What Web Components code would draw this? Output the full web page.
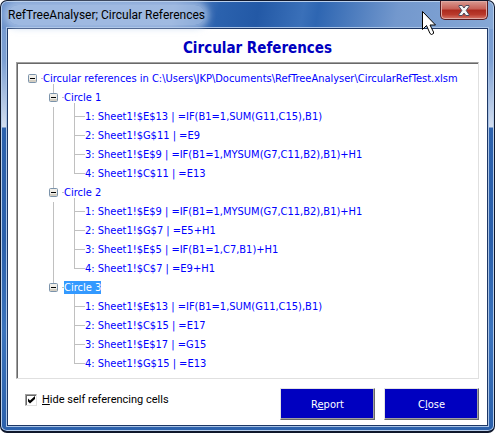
<!DOCTYPE html>
<html lang="en">
<head>
<meta charset="utf-8">
<title>RefTreeAnalyser; Circular References</title>
<style>
    body {
        margin: 0;
        font: 11px/19px "DejaVu Sans Condensed", "Noto Sans", sans-serif;
        color: #000;
        background: #fff;
    }
</style>
</head>
<body>
<aero-window>
    <span slot="title">RefTreeAnalyser; Circular References</span>
    <h1 slot="heading">Circular References</h1>
    <tree-view>
        <tree-node branch>
            <span slot="label">Circular references in C:\Users\JKP\Documents\RefTreeAnalyser\CircularRefTest.xlsm</span>
            <tree-node branch>
                <span slot="label">Circle 1</span>
                <tree-node><span slot="label">1: Sheet1!$E$13 | =IF(B1=1,SUM(G11,C15),B1)</span></tree-node>
                <tree-node><span slot="label">2: Sheet1!$G$11 | =E9</span></tree-node>
                <tree-node><span slot="label">3: Sheet1!$E$9 | =IF(B1=1,MYSUM(G7,C11,B2),B1)+H1</span></tree-node>
                <tree-node><span slot="label">4: Sheet1!$C$11 | =E13</span></tree-node>
            </tree-node>
            <tree-node branch>
                <span slot="label">Circle 2</span>
                <tree-node><span slot="label">1: Sheet1!$E$9 | =IF(B1=1,MYSUM(G7,C11,B2),B1)+H1</span></tree-node>
                <tree-node><span slot="label">2: Sheet1!$G$7 | =E5+H1</span></tree-node>
                <tree-node><span slot="label">3: Sheet1!$E$5 | =IF(B1=1,C7,B1)+H1</span></tree-node>
                <tree-node><span slot="label">4: Sheet1!$C$7 | =E9+H1</span></tree-node>
            </tree-node>
            <tree-node branch selected>
                <span slot="label">Circle 3</span>
                <tree-node><span slot="label">1: Sheet1!$E$13 | =IF(B1=1,SUM(G11,C15),B1)</span></tree-node>
                <tree-node><span slot="label">2: Sheet1!$C$15 | =E17</span></tree-node>
                <tree-node><span slot="label">3: Sheet1!$E$17 | =G15</span></tree-node>
                <tree-node><span slot="label">4: Sheet1!$G$15 | =E13</span></tree-node>
            </tree-node>
        </tree-node>
    </tree-view>
    <check-option slot="footer"><u>H</u>ide self referencing cells</check-option>
    <push-button slot="footer">R<u>e</u>port</push-button>
    <push-button slot="footer">C<u>l</u>ose</push-button>
</aero-window>

<script>
/**
 * Glass framed dialog window with a title bar, heading, body and footer.
 */
class AeroWindow extends HTMLElement {
    constructor() {
        super();
        this.attachShadow({ mode: 'open' });
    }

    connectedCallback() {
        this.shadowRoot.innerHTML = `
            <style>
                :host {
                    display: flex;
                    flex-direction: column;
                    box-sizing: border-box;
                    min-height: 100vh;
                    padding: 0 6px 5px;
                    border: 1px solid #10182c;
                    border-bottom-width: 2px;
                    border-radius: 7px;
                    box-shadow: inset 0 0 0 1px #b9cfec;
                    background:
                        linear-gradient(100deg, #6d93cc 0, #7396cd 35%, #2b62ae 44%, #2359a6 52%, #3a70b9 61%, #2e66b2 64%, #7398cd 80%, #86a8d6 100%) top / 100% 28px no-repeat,
                        linear-gradient(#7398cf 0, #7da0d3 60px, #d3deef 126px, #2d62ad 127px, #2b60ab 240px, #3c74bd 330px, #2b60ab 100%);
                }
                header {
                    position: relative;
                    display: flex;
                    align-items: flex-start;
                    justify-content: space-between;
                    height: 27px;
                }
                .title {
                    margin: 4px 0 0 1px;
                    font: 12px/20px Roboto, "Noto Sans", sans-serif;
                    border-radius: 10px;
                    background: rgba(190, 210, 238, .6);
                    box-shadow: 0 0 6px 4px rgba(190, 210, 238, .6);
                }
                .close {
                    display: flex;
                    align-items: center;
                    justify-content: center;
                    width: 48px;
                    height: 19px;
                    padding: 0;
                    border: 1px solid #571c22;
                    border-top: 0;
                    border-radius: 0 0 5px 5px;
                    box-shadow: inset 0 0 0 1px #e0aaa4;
                    background: linear-gradient(#d99a92 0, #c75f55 45%, #ac2a1e 50%, #b93a2c 75%, #d8776a 100%);
                }
                .pointer {
                    position: absolute;
                    top: 9px;
                    right: 51px;
                }
                main {
                    flex: 1;
                    display: flex;
                    flex-direction: column;
                    padding: 9px 8px 4px;
                    border: 1px solid #1d3765;
                    outline: 1px solid #a9c3e6;
                    background: #fff;
                }
                ::slotted(h1) {
                    margin: 0 0 4px;
                    padding-left: 20px;
                    font: bold 15px/20px "DejaVu Sans Condensed", "Noto Sans", sans-serif;
                    text-align: center;
                    color: #0000c0;
                }
                footer {
                    display: flex;
                    gap: 9px;
                    margin-top: 9px;
                }
            </style>
            <header>
                <div class="title"><slot name="title"></slot></div>
                <button class="close" aria-label="Close window">
                    <svg width="12" height="11" viewBox="0 0 12 11">
                        <path d="M1 .5h3.200L6 3 7.800 .5H11v1L8.200 5.500 11 9.500v1H7.800L6 8 4.200 10.500H1v-1L3.800 5.500 1 1.500z" fill="#f6f6f6" stroke="#4c4a5c"/>
                    </svg>
                </button>
                <svg class="pointer" width="16" height="26" viewBox="0 0 16 26">
                    <path d="M1.500 1.500v18l4-4 3.500 8 1.500 1 2-1v-1.500l-3.500-7h5.500z" fill="#fff" stroke="#000"/>
                </svg>
            </header>
            <main>
                <slot name="heading"></slot>
                <slot></slot>
                <footer><slot name="footer"></slot></footer>
            </main>
        `;
    }
}

/**
 * Sunken box that holds the tree.
 */
class TreeView extends HTMLElement {
    constructor() {
        super();
        this.attachShadow({ mode: 'open' });
    }

    connectedCallback() {
        this.shadowRoot.innerHTML = `
            <style>
                :host {
                    display: block;
                    padding: 6px 11px 5px;
                    border: 1px solid;
                    border-color: #a0a0a0 #e0e0e0 #e0e0e0 #a0a0a0;
                    box-shadow: inset 1px 1px 0 #696969;
                    color: #00f;
                }
            </style>
            <div role="tree"><slot></slot></div>
        `;
    }
}

/**
 * One line of the tree, with its child nodes in the default slot.
 */
class TreeNode extends HTMLElement {
    constructor() {
        super();
        this.attachShadow({ mode: 'open' });
    }

    connectedCallback() {
        const branch = this.hasAttribute('branch');
        this.shadowRoot.innerHTML = `
            <style>
                :host {
                    --line: linear-gradient(#c0c0c0, #c0c0c0);
                    display: block;
                    white-space: nowrap;
                }
                /* guide running down to the next sibling */
                :host([nested]:not(:last-child)) {
                    background: var(--line) 4px 19px / 1px 100% no-repeat;
                }
                .row {
                    display: flex;
                    align-items: center;
                    height: 19px;
                }
                :host([branch]) .row {
                    background: var(--line) 25px 15px / 1px 4px no-repeat;
                }
                :host([branch][nested]) .row {
                    background:
                        var(--line) 25px 15px / 1px 4px no-repeat,
                        var(--line) 4px 0 / 1px 5px no-repeat;
                }
                .gutter {
                    flex: none;
                    display: flex;
                    align-items: center;
                    width: 15px;
                    height: 19px;
                    background: var(--line) 13px 9px / 2px 1px no-repeat;
                }
                :host(:not([branch])) .gutter {
                    background:
                        var(--line) 4px 0 / 1px 100% no-repeat,
                        var(--line) 4px 9px / 11px 1px no-repeat;
                }
                :host(:not([branch]):last-child) .gutter {
                    background:
                        var(--line) 4px 0 / 1px 10px no-repeat,
                        var(--line) 4px 9px / 11px 1px no-repeat;
                }
                button {
                    display: flex;
                    width: 9px;
                    height: 9px;
                    padding: 0;
                    border: 0;
                    background: none;
                }
                .label {
                    line-height: 13px;
                }
                :host([selected]) .label {
                    color: #fff;
                    background: #3399ff;
                }
                .children {
                    padding-left: 21px;
                    color: #00f;
                }
            </style>
            <div class="row">
                <span class="gutter">${branch ? `
                    <button aria-label="Collapse">
                        <svg width="9" height="9" viewBox="0 0 9 9">
                            <rect x=".5" y=".5" width="8" height="8" rx="1" fill="#f0eee8" stroke="#7b93ab"/>
                            <path d="M1 6h7v2H1z" fill="#d3cec2"/>
                            <path d="M2 4.500h5" stroke="#000"/>
                        </svg>
                    </button>` : ''}
                </span>
                <span class="label"><slot name="label"></slot></span>
            </div>
            ${branch ? '<div class="children" role="group"><slot></slot></div>' : ''}
        `;
        this.setAttribute('role', 'treeitem');
        if (this.parentElement.localName === 'tree-node') {
            this.setAttribute('nested', '');
        }
    }
}

/**
 * Tick box with its caption.
 */
class CheckOption extends HTMLElement {
    constructor() {
        super();
        this.attachShadow({ mode: 'open' });
    }

    connectedCallback() {
        this.shadowRoot.innerHTML = `
            <style>
                :host {
                    flex: 1;
                    display: block;
                    padding: 2px 0 0 9px;
                    font-family: Roboto, "Noto Sans", sans-serif;
                }
                label {
                    display: flex;
                    align-items: center;
                    gap: 5px;
                    white-space: nowrap;
                }
                .box {
                    display: grid;
                }
                input, svg {
                    grid-area: 1 / 1;
                }
                input {
                    appearance: none;
                    box-sizing: border-box;
                    width: 12px;
                    height: 12px;
                    margin: 0;
                    border: 1px solid;
                    border-color: #a0a0a0 #e0e0e0 #e0e0e0 #a0a0a0;
                    box-shadow: inset 1px 1px 0 #696969;
                    background: #fff;
                }
                svg {
                    visibility: hidden;
                    pointer-events: none;
                }
                input:checked + svg {
                    visibility: visible;
                }
            </style>
            <label>
                <span class="box">
                    <input type="checkbox" checked>
                    <svg width="12" height="12" viewBox="0 0 12 12"><path d="M3 4.500v3L5 9.500l5-4.500V2L5 6.500z"/></svg>
                </span>
                <span><slot></slot></span>
            </label>
        `;
    }
}

/**
 * Raised blue command button.
 */
class PushButton extends HTMLElement {
    constructor() {
        super();
        this.attachShadow({ mode: 'open' });
    }

    connectedCallback() {
        this.shadowRoot.innerHTML = `
            <style>
                :host { display: block; }
                button {
                    display: block;
                    width: 95px;
                    height: 32px;
                    padding: 0;
                    border: 1px solid;
                    border-color: #e3e3e3 #696969 #696969 #e3e3e3;
                    box-shadow: inset -1px -1px 0 #a0a0a0;
                    font: inherit;
                    color: #fff;
                    background: #0000c0;
                }
            </style>
            <button><slot></slot></button>
        `;
    }
}

customElements.define('aero-window', AeroWindow);
customElements.define('tree-view', TreeView);
customElements.define('tree-node', TreeNode);
customElements.define('check-option', CheckOption);
customElements.define('push-button', PushButton);
</script>
</body>
</html>
